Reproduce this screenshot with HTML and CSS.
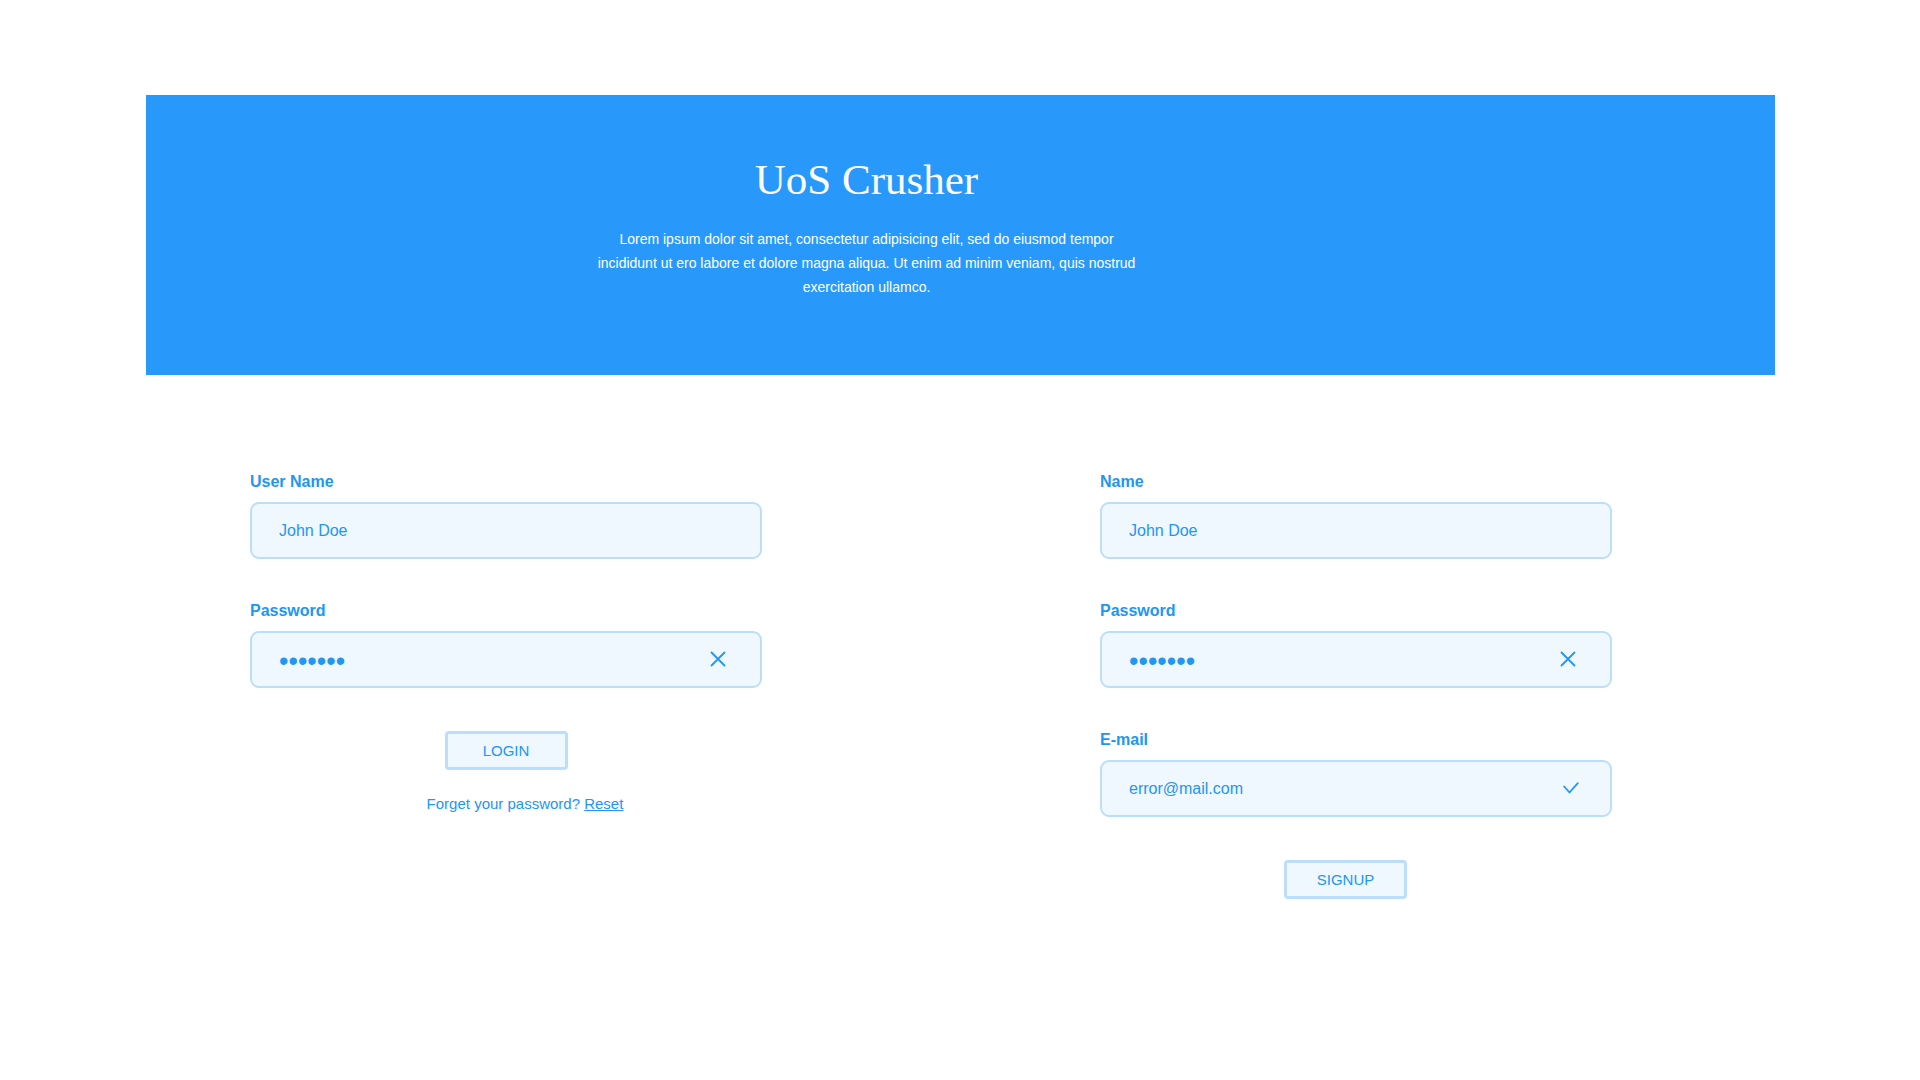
FILE: index.html
```html
<!DOCTYPE html>
<html lang="en">
<head>
<meta charset="utf-8">
<title>UoS Crusher</title>
<link rel="stylesheet" href="styles.css">
</head>
<body>
<div class="page">
  <header class="hero">
    <div class="hero-inner">
      <h1 class="hero-title">UoS Crusher</h1>
      <p class="hero-text">Lorem ipsum dolor sit amet, consectetur adipisicing elit, sed do eiusmod tempor incididunt ut ero labore et dolore magna aliqua. Ut enim ad minim veniam, quis nostrud exercitation ullamco.</p>
    </div>
  </header>

  <main class="forms">
    <section class="form-col">
      <div class="field">
        <label class="field-label">User Name</label>
        <div class="field-box"><span class="field-value">John Doe</span></div>
      </div>
      <div class="field">
        <label class="field-label">Password</label>
        <div class="field-box">
          <span class="field-dots">&#8226;&#8226;&#8226;&#8226;&#8226;&#8226;&#8226;</span>
          <svg class="field-icon" width="16" height="16" viewBox="0 0 16 16"><path d="M1.5 1.5 L14.5 14.5 M14.5 1.5 L1.5 14.5" stroke="#2196f3" stroke-width="1.8" fill="none" stroke-linecap="round"/></svg>
        </div>
      </div>
      <div class="actions">
        <button class="btn">LOGIN</button>
        <p class="forgot">Forget your password? <a href="#" class="forgot-link">Reset</a></p>
      </div>
    </section>

    <section class="form-col">
      <div class="field">
        <label class="field-label">Name</label>
        <div class="field-box"><span class="field-value">John Doe</span></div>
      </div>
      <div class="field">
        <label class="field-label">Password</label>
        <div class="field-box">
          <span class="field-dots">&#8226;&#8226;&#8226;&#8226;&#8226;&#8226;&#8226;</span>
          <svg class="field-icon" width="16" height="16" viewBox="0 0 16 16"><path d="M1.5 1.5 L14.5 14.5 M14.5 1.5 L1.5 14.5" stroke="#2196f3" stroke-width="1.8" fill="none" stroke-linecap="round"/></svg>
        </div>
      </div>
      <div class="field">
        <label class="field-label">E-mail</label>
        <div class="field-box">
          <span class="field-value">error@mail.com</span>
          <svg class="field-icon field-icon-check" width="16" height="12" viewBox="0 0 16 12"><path d="M1.2 4.5 L6.5 10.5 L14.8 1.2" stroke="#2196f3" stroke-width="1.8" fill="none" stroke-linecap="round" stroke-linejoin="round"/></svg>
        </div>
      </div>
      <div class="actions actions-signup">
        <button class="btn">SIGNUP</button>
      </div>
    </section>
  </main>
</div>
</body>
</html>
```

FILE: styles.css
```css
html, body {
  margin: 0;
  padding: 0;
  background: #ffffff;
}

body {
  font-family: "Liberation Sans", Arial, sans-serif;
  color: #2196f3;
}

.page {
  padding: 95px 145px 0 146px;
}

.hero {
  background: #2899fb;
  height: 280px;
  box-sizing: border-box;
  padding: 61px 188px 0 0;
  color: #ffffff;
}

.hero-inner {
  display: flex;
  flex-direction: column;
  align-items: center;
  text-align: center;
}

.hero-title {
  margin: 0;
  font-family: "Liberation Serif", "Times New Roman", serif;
  font-weight: normal;
  font-size: 43px;
  line-height: 48px;
}

.hero-text {
  margin: 23px 0 0 0;
  width: 550px;
  font-size: 14px;
  line-height: 24px;
}

.forms {
  display: grid;
  grid-template-columns: 512px 512px;
  column-gap: 338px;
  margin-top: 98px;
  padding-left: 104px;
}

.form-col {
  display: flex;
  flex-direction: column;
}

.field {
  display: flex;
  flex-direction: column;
  margin-bottom: 43px;
}

.field-label {
  font-size: 16px;
  font-weight: bold;
  line-height: 18px;
  margin-bottom: 11px;
  color: #2196f3;
}

.field-box {
  height: 57px;
  box-sizing: border-box;
  border: 2px solid #bbdefb;
  border-radius: 9px;
  background: #f0f8ff;
  display: flex;
  align-items: center;
  padding: 0 34px 0 27px;
}

.field-value {
  flex: 1;
  font-size: 16px;
  color: #2196f3;
}

.field-dots {
  flex: 1;
  font-size: 27px;
  line-height: 20px;
  color: #2196f3;
  margin-top: 2px;
}

.field-icon {
  flex: none;
  display: block;
  margin-top: -2px;
}

.field-icon-check {
  margin-right: -3px;
}

.actions {
  display: flex;
  flex-direction: column;
  align-items: center;
}

.btn {
  width: 123px;
  height: 39px;
  box-sizing: border-box;
  border: 3px solid #bbdefb;
  border-radius: 4px;
  background: #f0f8ff;
  color: #2196f3;
  font-family: "Liberation Sans", Arial, sans-serif;
  font-size: 15px;
  padding: 0;
  cursor: pointer;
}

.forgot {
  margin: 25px 0 0 38px;
  font-size: 15px;
  color: #2196f3;
}

.forgot-link {
  color: #2196f3;
  text-decoration: underline;
}

.actions-signup {
  margin-top: 0;
  padding-right: 21px;
}
```
